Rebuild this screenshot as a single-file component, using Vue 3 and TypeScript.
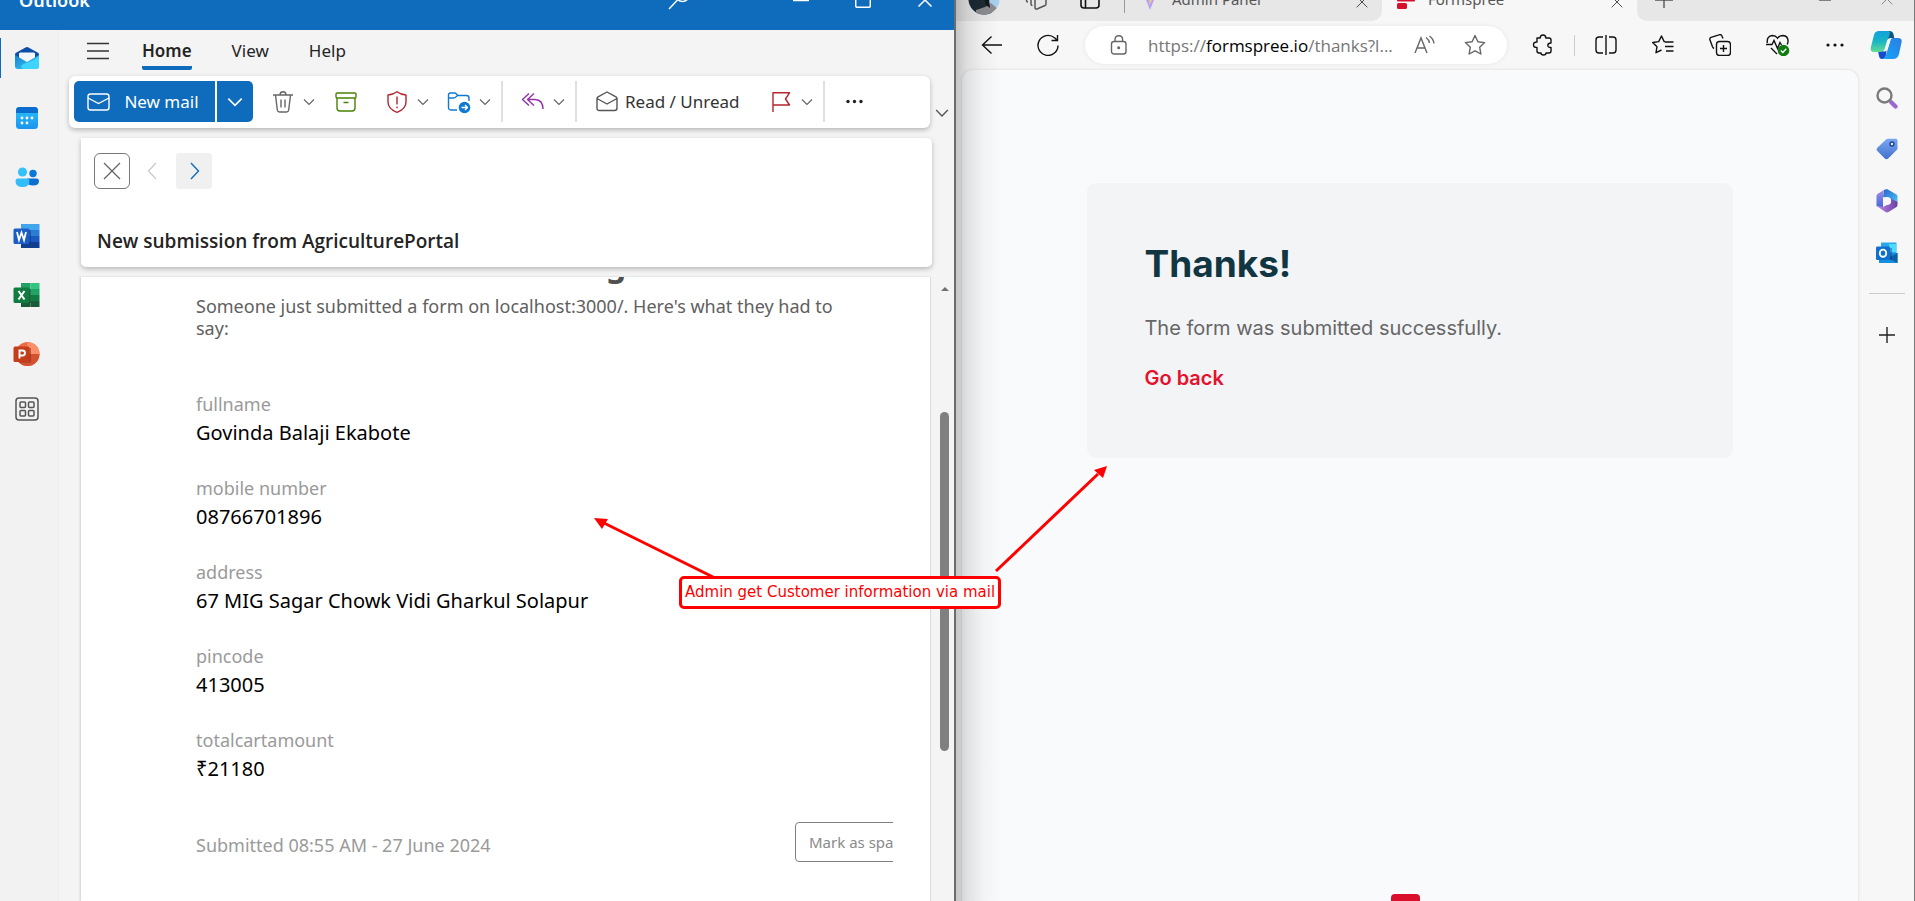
<script setup lang="ts">
interface Field {
  label: string
  value: string
}

const fields: Field[] = [
  { label: 'fullname', value: 'Govinda Balaji Ekabote' },
  { label: 'mobile number', value: '08766701896' },
  { label: 'address', value: '67 MIG Sagar Chowk Vidi Gharkul Solapur' },
  { label: 'pincode', value: '413005' },
  { label: 'totalcartamount', value: '₹21180' },
]

const menus: string[] = ['Home', 'View', 'Help']
</script>

<template>
  <div class="desktop">
    <svg class="defs" aria-hidden="true">
      <symbol id="chev" viewBox="0 0 12 12"><path d="M1 3.500l5 5 5-5" fill="none" stroke="currentColor" stroke-width="1.200" /></symbol>
      <symbol id="cross" viewBox="0 0 18 18"><path d="M1 1l16 16M17 1L1 17" fill="none" stroke="currentColor" stroke-width="1.300" /></symbol>
      <linearGradient id="lgMail" x1="0" y1="0" x2="1" y2="1"><stop offset="0" stop-color="#1b7fd0" /><stop offset="1" stop-color="#35d0fa" /></linearGradient>
      <linearGradient id="lgCal" x1="0" y1="0" x2="0" y2="1"><stop offset="0" stop-color="#2bc3fb" /><stop offset="1" stop-color="#1a94ee" /></linearGradient>
      <linearGradient id="lgTag" x1="0" y1="0" x2="0" y2="1"><stop offset="0" stop-color="#79a8f0" /><stop offset="1" stop-color="#4370cf" /></linearGradient>
      <linearGradient id="lgVite" x1="0" y1="0" x2="1" y2="0"><stop offset="0" stop-color="#9bb6fb" /><stop offset="1" stop-color="#d58df0" /></linearGradient>
      <linearGradient id="lgCoA" x1="0" y1="0" x2="0" y2="1"><stop offset="0" stop-color="#12a0e0" /><stop offset=".5" stop-color="#18b6c4" /><stop offset="1" stop-color="#62dc92" /></linearGradient>
      <linearGradient id="lgCoB" x1="0" y1="1" x2="1" y2="0"><stop offset="0" stop-color="#14a6fb" /><stop offset="1" stop-color="#2b7de0" /></linearGradient>
      <linearGradient id="lgM1" x1="0" y1="0" x2="1" y2="1"><stop offset="0" stop-color="#2b62c8" /><stop offset="1" stop-color="#49c6fa" /></linearGradient>
      <linearGradient id="lgM2" x1="0" y1="0" x2="0" y2="1"><stop offset="0" stop-color="#a68be8" /><stop offset="1" stop-color="#3b6ad8" /></linearGradient>
      <linearGradient id="lgM3" x1="0" y1="0" x2="1" y2="0"><stop offset="0" stop-color="#c38af0" /><stop offset="1" stop-color="#6a3fa0" /></linearGradient>
    </svg>

    <section class="outlook">
      <header class="titlebar">
        <span class="app-name">Outlook</span>
        <button class="tb-search" aria-label="Search"><svg width="24" height="24" viewBox="0 0 24 24"><circle cx="15.500" cy="7" r="6.500" /><path d="M10.500 12L2 21" /></svg></button>
        <button class="tb-btn" aria-label="Minimize"><svg width="16" height="16" viewBox="0 0 16 16"><path d="M0 8.500h16" /></svg></button>
        <button class="tb-btn" aria-label="Maximize"><svg width="16" height="16" viewBox="0 0 16 16"><rect x=".7" y=".7" width="14.600" height="14.600" rx="1.500" /></svg></button>
        <button class="tb-btn" aria-label="Close"><svg width="16" height="16" viewBox="0 0 16 16"><path d="M1.500 1.500l13 13M14.500 1.500l-13 13" /></svg></button>
      </header>

      <div class="outlook-main">
        <nav class="rail" aria-label="Apps">
          <button class="rail-btn active" aria-label="Mail">
            <svg width="24" height="24" viewBox="0 0 24 24"><path d="M0 8.500Q0 7.500 1 6.800L10.500 1.500q1.500-.8 3 0L23 6.800q1 .7 1 1.700V14H0z" fill="#0c4fa8" /><path d="M4 7h16v8H4z" fill="#fff" /><path d="M4 8q0-1.500 1.500-1.500h13Q20 6.500 20 8v3l-8 5-8-5z" fill="#f3f6fc" /><path d="M0 9l12 7 12-7v11q0 3-3 3H3q-3 0-3-3z" fill="url(#lgMail)" /><path d="M24 10v10q0 3-3 3H8q-3-2-1-4 1-1 4-2 9-3 13-7z" fill="#3fd4fb" /></svg>
          </button>
          <button class="rail-btn" aria-label="Calendar">
            <svg width="24" height="24" viewBox="0 0 24 24"><rect x="1" y="1" width="22" height="22" rx="3.500" fill="url(#lgCal)" /><path d="M1 7V4.500Q1 1 4.500 1h15Q23 1 23 4.500V7z" fill="#0b6cce" /><g fill="#fff"><circle cx="7" cy="12" r="1.400" /><circle cx="12" cy="12" r="1.400" /><circle cx="17" cy="12" r="1.400" /><circle cx="7" cy="17" r="1.400" /><circle cx="12" cy="17" r="1.400" /></g></svg>
          </button>
          <button class="rail-btn" aria-label="People">
            <svg width="24" height="24" viewBox="0 0 24 24"><circle cx="18" cy="8.500" r="3.700" fill="#0c78d6" /><path d="M12 13.500h10q2 0 2 2.500 0 4.500-6 4.500-5 0-6-3z" fill="#0a6fd0" /><circle cx="7.500" cy="7" r="4.600" fill="#35c2fb" /><path d="M2.500 13.500h10q2 0 2 2.500 0 6-7 6t-7-6q0-2.500 2-2.500z" fill="#33bdf8" /></svg>
          </button>
          <button class="rail-btn" aria-label="Word">
            <svg width="28" height="26" viewBox="0 0 28 26"><path d="M8 1h18.500v6H8z" fill="#41a5ee" /><path d="M8 7h18.500v6H8z" fill="#2b7cd3" /><path d="M8 13h18.500v6H8z" fill="#185abd" /><path d="M8 19h18.500v6H8z" fill="#103f91" /><path d="M8 7h10v14H8z" fill="#0b2f70" opacity=".45" /><rect x=".5" y="5.500" width="16" height="15.500" rx="1.500" fill="#1d5cc4" /><path d="M4 9l2 8 2.500-7.500L11 17l2-8" fill="none" stroke="#fff" stroke-width="1.800" /></svg>
          </button>
          <button class="rail-btn" aria-label="Excel">
            <svg width="28" height="26" viewBox="0 0 28 26"><path d="M8 1h9.500v6H8z" fill="#21a366" /><path d="M17.500 1h9v6h-9z" fill="#33c481" /><path d="M8 7h9.500v6H8z" fill="#107c41" /><path d="M17.500 7h9v6h-9z" fill="#21a366" /><path d="M8 13h9.500v12H8z" fill="#185c37" /><path d="M17.500 13h9v6h-9z" fill="#107c41" /><path d="M17.500 19h9v6h-9z" fill="#185c37" /><path d="M8 7h10v14H8z" fill="#0c3b22" opacity=".45" /><rect x=".5" y="5.500" width="16" height="15.500" rx="1.500" fill="#107c41" /><path d="M5.500 9l6 8.500M11.500 9l-6 8.500" fill="none" stroke="#fff" stroke-width="2" /></svg>
          </button>
          <button class="rail-btn" aria-label="PowerPoint">
            <svg width="28" height="26" viewBox="0 0 28 26"><circle cx="14.500" cy="13" r="12" fill="#ed6c47" /><path d="M14.500 1a12 12 0 0 1 12 12h-12z" fill="#ff8f6b" /><path d="M26.500 13a12 12 0 0 1-24 0z" fill="#d35230" /><path d="M4 7h14v14.500H6z" fill="#7c2510" opacity=".5" /><rect x=".5" y="5.500" width="16" height="15.500" rx="1.500" fill="#c43e1c" /><path d="M6.500 17.500V9.500h3a2.400 2.400 0 0 1 0 5h-3" fill="none" stroke="#fff" stroke-width="1.900" /></svg>
          </button>
          <button class="rail-btn more" aria-label="More apps">
            <svg width="24" height="24" viewBox="0 0 24 24" fill="none" stroke="#555" stroke-width="1.500"><rect x="1" y="1" width="22" height="22" rx="3" /><rect x="5" y="5" width="5.500" height="5.500" rx="1" /><rect x="13.500" y="5" width="5.500" height="5.500" rx="1" /><rect x="5" y="13.500" width="5.500" height="5.500" rx="1" /><rect x="13.500" y="13.500" width="5.500" height="5.500" rx="1" /></svg>
          </button>
        </nav>

        <div class="work">
          <div class="menubar">
            <button class="burger" aria-label="Toggle navigation"><svg width="22" height="18" viewBox="0 0 22 18"><path d="M0 1.500h22M0 9h22M0 16.500h22" stroke="#333" stroke-width="1.300" /></svg></button>
            <button v-for="(m, i) in menus" :key="m" class="menu" :class="{ current: i === 0 }">{{ m }}</button>
          </div>

          <div class="ribbon-row">
            <div class="ribbon">
              <button class="new-mail">
                <svg width="24" height="24" viewBox="0 0 24 24" fill="none" stroke="#fff" stroke-width="1.400"><rect x="2" y="4" width="21" height="16" rx="2.500" /><path d="M2 8l10.500 5.500L23 8" /></svg>
                New mail
              </button>
              <button class="new-more" aria-label="New mail options"><svg width="16" height="16"><use href="#chev" /></svg></button>
              <button class="tool" aria-label="Delete"><svg class="ic" viewBox="0 0 24 24" stroke="#666"><path d="M2 5h20M4.500 5l1.800 15q.3 2 2.300 2h6.800q2 0 2.300-2L19.500 5M9 5q0-3.200 3-3.200T15 5M10 9.500v8M14 9.500v8" /></svg><svg class="cv"><use href="#chev" /></svg></button>
              <button class="tool solo" aria-label="Archive"><svg class="ic" viewBox="0 0 24 24" stroke="#498205"><rect x="2" y="3" width="20" height="5" rx="1.200" /><path d="M3 8v10q0 3 3 3h12q3 0 3-3V8M9.500 12.500h5" /></svg></button>
              <button class="tool" aria-label="Report"><svg class="ic" viewBox="0 0 24 24" stroke="#b3262e"><path d="M12 1.800q4 3 9 3.200v7q0 7-9 10.300Q3 19 3 12V5q5-.2 9-3.200zM12 6.500v8M12 16.500v1.800" /></svg><svg class="cv"><use href="#chev" /></svg></button>
              <button class="tool" aria-label="Move to"><svg class="ic" viewBox="0 0 24 24" stroke="#0f78d4"><path d="M10 20H4q-2.500 0-2.500-2.500V5Q1.500 3 3.500 3h4q1 0 1.700.8L11 5.500h8.500q2.500 0 2.500 2.500v3M1.500 8h5q1.500 0 2.300-.9L10.500 5.500" /><circle cx="17.500" cy="17.500" r="5.800" fill="#0f78d4" stroke="none" /><path d="M14.500 17.500h6M18 15l2.500 2.500L18 20" stroke="#fff" /></svg><svg class="cv"><use href="#chev" /></svg></button>
              <span class="rule"></span>
              <button class="tool" aria-label="Reply all"><svg class="ic" viewBox="0 0 24 24" stroke="#9332a8"><path d="M8 3.500L1.500 9.500 8 15.500M13 3.500L6.500 9.500l6.500 6M6.500 9.500H14q8 .5 8 9.500" /></svg><svg class="cv"><use href="#chev" /></svg></button>
              <span class="rule"></span>
              <button class="tool text"><svg class="ic" viewBox="0 0 24 24" stroke="#555"><path d="M2 8.500q0-1 1-1.600L12 2l9 4.900q1 .6 1 1.600V18q0 2.500-2.500 2.500h-15Q2 20.500 2 18zM2 8.500l10 5.500 10-5.500" /></svg>Read / Unread</button>
              <button class="tool" aria-label="Flag"><svg class="ic" viewBox="0 0 24 24" stroke="#b3262e"><path d="M4 22V2.800h16.500L16.500 9l4 6H4" /></svg><svg class="cv"><use href="#chev" /></svg></button>
              <span class="rule"></span>
              <button class="tool" aria-label="More options"><svg class="ic" viewBox="0 0 24 24"><g fill="#222" stroke="none"><circle cx="5" cy="11.500" r="1.700" /><circle cx="11.500" cy="11.500" r="1.700" /><circle cx="18" cy="11.500" r="1.700" /></g></svg></button>
            </div>
            <button class="ribbon-more" aria-label="Ribbon display options"><svg width="14" height="14"><use href="#chev" /></svg></button>
          </div>

          <div class="subject-card">
            <div class="card-actions">
              <button class="close" aria-label="Close message"><svg width="18" height="18"><use href="#cross" /></svg></button>
              <button class="prev" aria-label="Previous message"><svg width="10" height="18" viewBox="0 0 10 18"><path d="M9 1L1.500 9 9 17" /></svg></button>
              <button class="next" aria-label="Next message"><svg width="10" height="18" viewBox="0 0 10 18"><path d="M1 1l7.500 8L1 17" /></svg></button>
            </div>
            <h1>New submission from AgriculturePortal</h1>
          </div>

          <div class="reader">
            <article class="mail">
              <h2>g</h2>
              <p class="intro">Someone just submitted a form on localhost:3000/. Here's what they had to say:</p>
              <dl>
                <div v-for="f in fields" :key="f.label">
                  <dt>{{ f.label }}</dt>
                  <dd>{{ f.value }}</dd>
                </div>
              </dl>
              <footer>
                <span>Submitted 08:55 AM - 27 June 2024</span>
                <button>Mark as spam</button>
              </footer>
            </article>
            <div class="scroll"><i class="arrow"></i><i class="thumb"></i></div>
          </div>
        </div>
      </div>
    </section>

    <section class="edge">
      <header class="tabs">
        <div class="tab-tools">
          <svg width="32" height="32" viewBox="0 0 32 32"><defs><clipPath id="av"><circle cx="16" cy="16" r="15.500" /></clipPath></defs><g clip-path="url(#av)"><path d="M0 0h32v32H0z" fill="#a9d0f0" /><path d="M0 0h12l3 12 4 6 2 8 5 6H0z" fill="#1d2a33" /><path d="M8 27l9-3 6-4 9 8v4H8z" fill="#8c8c90" /><path d="M16 14l5 2 1 9-4-3z" fill="#10161b" /></g></svg>
          <svg width="24" height="24" viewBox="0 0 24 24" fill="none" stroke="#555" stroke-width="1.500"><path d="M11 4l9-2q2 0 2 2v13q0 1-1 1.500L13 22q-2 .5-2-1.500zM7 3v14q0 1.500 1.500 1.500M2.500 3v10q0 2 1.500 2" /></svg>
          <svg width="20" height="20" viewBox="0 0 20 20" fill="none" stroke="#111" stroke-width="1.600"><rect x="1" y="1" width="18" height="18" rx="3" /><path d="M1 5.500h18M5.500 5.500V19" /></svg>
        </div>
        <button class="tab">
          <svg width="16" height="22" viewBox="0 0 16 22"><path d="M0 2h16L8 22z" fill="url(#lgVite)" /><path d="M6 1h6l-2 6h3l-6 10 1-7H5z" fill="#fbd65c" /></svg>
          <span>Admin Panel</span>
          <svg width="12" height="12" class="x"><use href="#cross" /></svg>
        </button>
        <button class="tab on">
          <svg width="18" height="20" viewBox="0 0 18 20"><g fill="#d60f2c"><rect width="18" height="5" rx="1" /><rect y="7" width="18" height="5.500" rx="1" /><rect y="14" width="10" height="6" rx="1.500" /></g></svg>
          <span>Formspree</span>
          <svg width="12" height="12" class="x"><use href="#cross" /></svg>
        </button>
        <div class="win">
          <svg width="18" height="18" viewBox="0 0 18 18"><path d="M0 10h18M9 0v18" /></svg>
          <span class="grow"></span>
          <svg width="12" height="12" viewBox="0 0 12 12" class="min"><path d="M0 7h12" /></svg>
          <svg width="12" height="12"><use href="#cross" /></svg>
        </div>
      </header>

      <div class="address-row">
        <button class="nav" aria-label="Back"><svg width="22" height="20" viewBox="0 0 22 20"><path d="M21 10H1.500M10.500 1.500L1.500 10l9 8.500" /></svg></button>
        <button class="nav reload" aria-label="Refresh"><svg width="22" height="22" viewBox="0 0 22 22"><path d="M21 11.500A10 10 0 1 1 17.500 3.800L20.500 6.500M20.500 1v5.500h-6" /></svg></button>
        <div class="omnibox">
          <svg width="18" height="20" viewBox="0 0 18 20"><rect x="1.500" y="6.500" width="14.500" height="12.500" rx="2.500" /><path d="M5 6.500V4.500q0-3.800 3.800-3.800t3.800 3.800v2" /><circle cx="8.700" cy="12.700" r=".8" fill="#555" /></svg>
          <a class="url" href="#">https://<b>formspree.io</b>/thanks?l...</a>
          <svg width="22" height="20" viewBox="0 0 22 20"><path d="M1 18L7 3l6 15M3 13h8M12 2.500q3 2 3.500 5.500M15.500 1q4 3 4.500 7.500" /></svg>
          <svg width="22" height="22" viewBox="0 0 22 22"><path d="M11 1.500l2.900 6.200 6.700.9-4.900 4.700 1.200 6.700L11 16.800 5.100 20l1.200-6.700L1.400 8.600l6.700-.9z" stroke-linejoin="round" /></svg>
        </div>
        <div class="toolset">
          <button aria-label="Extensions"><svg viewBox="0 0 22 22"><path d="M5 4h3.200q0-3 2.800-3t2.800 3H17q2 0 2 2v3q-3.200 0-3.200 2.300T19 13.500V17q0 2-2 2h-3q0 2-2.500 2T9 19H7q-2 0-2-2v-3.500q-3.500 0-3.500-2.800T5 8z" stroke-linejoin="round" /></svg></button>
          <i class="sep"></i>
          <button aria-label="Split screen"><svg viewBox="0 0 22 22"><path d="M8 3H4Q1 3 1 6v10q0 3 3 3h4M14 3h4q3 0 3 3v10q0 3-3 3h-4M11 1v20" /></svg></button>
          <button aria-label="Favorites"><svg viewBox="0 0 22 22"><path d="M14.500 8l-2.300-.4L9.500 2 6.700 7.600l-6 .9L5 12.700l-1 6L9.500 16M13 8h8.500M13 12.500h8.500M14 17h7.500" stroke-linejoin="round" /></svg></button>
          <button aria-label="Collections"><svg viewBox="0 0 22 22"><rect x="7.500" y="7.500" width="14" height="14" rx="3" /><path d="M14.500 11v7M11 14.500h7M5 14.500q-1-.5-1.500-1.700L1 6Q.3 4 2 3.300L10 .8q2-.7 2.800 1L14 4.500" /></svg></button>
          <button aria-label="Browser essentials"><svg class="wide" viewBox="0 0 24 22"><path d="M1.300 9Q.5 2 6.500 1.500q3 0 5 2.700Q13.500 1.500 17 1.500q5.500.5 5 6.500-.2 1.500-1 2.500M0 10.500h6l2-4 3.500 8 2.500-6 1.500 2.500M5 14l6 6" /><circle cx="17.500" cy="16.500" r="5.800" fill="#107c10" stroke="none" /><path d="M14.800 16.500l2 2 3.500-3.700" stroke="#fff" /></svg></button>
          <button aria-label="Settings"><svg viewBox="0 0 22 22"><g fill="#111" stroke="none"><circle cx="3" cy="11" r="1.600" /><circle cx="10" cy="11" r="1.600" /><circle cx="17" cy="11" r="1.600" /></g></svg></button>
        </div>
        <button class="copilot" aria-label="Copilot"><svg width="32" height="28" viewBox="0 0 32 28"><path d="M16 0h4q2.500 0 3.300 2.500L24.500 8H21q-3 0-4 3z" fill="#0a567e" /><path d="M8 20h6l3-5-1 9q-1 4-4 4-2.500 0-3-3z" fill="#174ad0" /><path d="M9 0h9q2.500 0 1.700 3L15 17q-1 4-5 4H4Q0 21 .8 16.500L4 4q1-4 5-4z" fill="url(#lgCoA)" /><path d="M22 7h6q4.500 0 3.500 4.500L29 23q-1.200 5-6 5H12q3 0 4-4l4-13q.7-4 2-4z" fill="url(#lgCoB)" /><path d="M17 9.500q.7-2.500 3.500-2.500h1.700q-1.700.5-2.300 3.500L17.500 18q-.7 2.500-3 2.500h-2q1.800-.7 2.500-3z" fill="#f7f7f7" /></svg></button>
      </div>

      <div class="view-row">
        <main class="page">
          <div class="thanks">
            <h2>Thanks!</h2>
            <p>The form was submitted successfully.</p>
            <a href="#">Go back</a>
          </div>
          <div class="brand"></div>
        </main>
        <aside class="sidebar">
          <button aria-label="Search"><svg width="22" height="22" viewBox="0 0 22 22"><path d="M13.500 13.500l1.500 1.500" stroke="#7b7b7b" stroke-width="2.500" /><path d="M15.500 15.500l4 4" stroke="#9a66d0" stroke-width="4.200" stroke-linecap="round" /><circle cx="8.500" cy="8.500" r="7" fill="#f7f7f7" stroke="#7b7b7b" stroke-width="2.400" /></svg></button>
          <button aria-label="Shopping"><svg width="22" height="22" viewBox="0 0 22 22"><path d="M12 .8h8q1.500 0 1.500 1.500v8q0 1-.8 1.800l-8.500 8.500q-1.700 1.500-3.400 0L1.300 13q-1.500-1.500 0-3.300L10 1.500q.8-.7 2-.7z" fill="url(#lgTag)" /><circle cx="16" cy="6" r="2" fill="#dbe8ff" stroke="#26408f" stroke-width="1.400" /></svg></button>
          <button aria-label="Microsoft 365"><svg width="22" height="24" viewBox="0 0 22 24"><path d="M8 1l3-1 9.500 5.500q1 .8 1 2V14L14 9.500 7 8z" fill="url(#lgM1)" /><path d="M8 1L1.500 5Q.5 5.800.5 7v10L7 19V8z" fill="url(#lgM2)" /><path d="M.5 17l9 6q1.500.8 3 0l8-5q1-.8 1-2v-3L15 9.500V14l-8 4z" fill="url(#lgM3)" /><circle cx="11" cy="12" r="4" fill="#f7f7f7" /></svg></button>
          <button aria-label="Outlook"><svg width="22" height="22" viewBox="0 0 22 22"><path d="M5 .5h15.500V11H5z" fill="#28a8ea" /><path d="M13 2h7v8h-7z" fill="#50d9ff" /><path d="M3 11h18.500v10H3z" fill="#1490df" /><path d="M21.500 11v10L12 16z" fill="#0f5fa8" /><path d="M5 6h11v12H5z" fill="#0a2f6b" opacity=".4" /><rect x="0" y="4.500" width="14" height="13.500" rx="1.300" fill="#0f6fcf" /><ellipse cx="7" cy="11.200" rx="3.200" ry="3.600" fill="none" stroke="#fff" stroke-width="1.900" /></svg></button>
          <hr />
          <button aria-label="Customize"><svg width="16" height="16" viewBox="0 0 16 16"><path d="M0 8h16M8 0v16" stroke="#222" stroke-width="1.400" /></svg></button>
        </aside>
      </div>
    </section>

    <svg class="arrows" aria-hidden="true">
      <g stroke="#f00" stroke-width="3"><path d="M713 577L604 523" /><path d="M996 571L1098 474" /></g>
      <path d="M594 518l14 1-6 10z" fill="#f00" /><path d="M1107 466l-13 4 9 8z" fill="#f00" />
    </svg>
    <div class="callout">Admin get Customer information via mail</div>
  </div>
</template>

<style>
body { margin: 0; overflow: hidden; }
</style>

<style scoped>
* { box-sizing: border-box; }
button { border: 0; background: none; padding: 0; margin: 0; font: inherit; color: inherit; display: flex; align-items: center; justify-content: center; flex: none; }
svg { flex: none; display: block; }
.desktop { position: relative; display: grid; grid-template-columns: 956px 1fr; height: 100vh; overflow: hidden; font-family: "Noto Sans", "Open Sans", sans-serif; }
.defs { position: absolute; width: 0; height: 0; }

.outlook { display: flex; flex-direction: column; min-width: 0; min-height: 0; margin-top: -31px; background: #f4f4f4; border-right: 2px solid #6c6c6c; }
.titlebar { height: 61px; flex: none; display: flex; align-items: center; background: #0f6cbd; color: #fff; padding: 0 21px 0 19px; }
.titlebar svg { fill: none; stroke: #fff; stroke-width: 1.500; }
.app-name { font-size: 18px; font-weight: 600; flex: 1; }
.tb-search { width: 24px; margin-right: 90px; }
.tb-btn { width: 16px; margin-left: 46px; }
.tb-search + .tb-btn { margin-left: 12px; }
.outlook-main { flex: 1; display: flex; min-height: 0; }
.rail { width: 59px; flex: none; background: #f2f2f2; border-right: 1px solid #eee; display: flex; flex-direction: column; padding-top: 8px; }
.rail-btn { height: 40px; margin-bottom: 19px; padding-right: 6px; border-left: 1px solid transparent; }
.rail-btn.active { border-left-color: #0f6cbd; margin-bottom: 20px; }
.rail-btn.more { height: 32px; }
.work { flex: 1; min-width: 0; display: flex; flex-direction: column; }
.menubar { display: flex; height: 46px; padding-left: 28px; color: #242424; font-size: 17px; }
.burger { width: 22px; height: 42px; margin-right: 33px; }
.menu { height: 40px; margin-right: 40px; border-bottom: 4px solid transparent; padding-top: 5px; }
.menu.current { font-weight: 600; border-bottom-color: #0f6cbd; border-radius: 2px; }
.ribbon-row { display: flex; padding-left: 10px; }
.ribbon { flex: 1; display: flex; align-items: center; height: 52px; padding: 0 0 1px 5px; background: #fff; border-radius: 6px; box-shadow: 0 2px 5px rgba(0, 0, 0, .25); font-size: 17px; color: #333; }
.new-mail { width: 141px; height: 41px; gap: 14px; padding-right: 4px; background: #0f6cbd; color: #fff; border-radius: 5px 0 0 5px; margin-right: 2px; }
.new-more { width: 36px; height: 41px; background: #0f6cbd; color: #fff; border-radius: 0 5px 5px 0; }
.tool { margin-left: 18px; gap: 8px; color: #666; }
.tool.solo { margin-left: 19px; margin-right: 9px; }
.tool.text { color: #333; gap: 6px; margin-right: 11px; }
.ic { width: 24px; height: 24px; fill: none; stroke-width: 1.400; stroke-linejoin: round; }
.cv { width: 12px; height: 12px; }
.rule { width: 2px; height: 41px; background: #e0e0e0; margin-left: 10px; flex: none; }
.ribbon-more { width: 24px; margin-top: 22px; color: #555; }
.subject-card { margin: 10px 22px 0; height: 129px; flex: none; background: #fff; border-radius: 0 5px 5px 5px; box-shadow: 0 2px 5px rgba(0, 0, 0, .25); padding: 15px 13px 0; }
.card-actions { display: flex; align-items: center; }
.card-actions svg { fill: none; stroke-width: 1.400; }
.close, .next { width: 36px; height: 36px; }
.close { border: 1px solid #777; border-radius: 6px; color: #666; }
.prev { width: 10px; margin: 0 19px 0 17px; stroke: #ccc; }
.next { background: #f0f0f0; border-radius: 3px; stroke: #0f6cbd; padding-left: 2px; }
h1 { margin: 38px 0 0 3px; font-family: "Open Sans", "Noto Sans", sans-serif; font-size: 19px; line-height: 28px; font-weight: 600; color: #242424; white-space: nowrap; }
.reader { flex: 1; display: flex; margin: 10px 0 0 22px; min-height: 0; }
.mail { flex: 1; min-width: 0; background: #fff; border-right: 1px solid #ddd; padding: 0 37px 0 115px; overflow: hidden; box-shadow: -1px 0 2px rgba(0, 0, 0, .15); }
.mail h2 { margin: -34px 0 0; padding-left: 410px; font-size: 32px; line-height: 42px; color: #505050; height: 42px; }
.intro { margin: 10px 40px 0 0; font-size: 18px; line-height: 22px; color: #606060; }
dl { margin: 50px 0 0; }
dl div { height: 84px; }
dt { font-size: 18px; line-height: 30px; color: #9a9a9a; }
dd { margin: 0; font-size: 20px; line-height: 28px; color: #000; }
footer { display: flex; align-items: center; height: 40px; margin-top: 13px; overflow: hidden; font-size: 18px; color: #9a9a9a; white-space: nowrap; }
footer span { width: 599px; flex: none; padding-top: 5px; }
footer button { width: 118px; height: 40px; border: 1px solid #808080; border-radius: 4px; font-size: 15px; color: #8a8a8a; padding-left: 13px; justify-content: flex-start; }
.scroll { width: 23px; flex: none; display: flex; flex-direction: column; align-items: center; padding-left: 4px; }
.arrow { margin-top: 10px; border: 4px solid transparent; border-top: 0; border-bottom-color: #707070; }
.thumb { width: 9px; height: 339px; margin-top: 121px; border-radius: 5px; background: #808080; }

.edge { position: relative; min-width: 0; min-height: 0; display: flex; flex-direction: column; margin-top: -23px; background: #f7f7f7; border-right: 1px solid #777; }
.edge::before { content: ""; position: absolute; inset: 0 auto 0 0; width: 44px; background: linear-gradient(90deg, rgba(0, 0, 0, .2), rgba(0, 0, 0, .1) 25%, rgba(0, 0, 0, .03) 60%, transparent); pointer-events: none; }
.tabs { height: 44px; flex: none; display: flex; align-items: stretch; background: #f7f7f7; font-size: 15px; color: #555; }
.tab-tools { width: 169px; flex: none; display: flex; align-items: center; background: #e7e7e7; padding-left: 12px; gap: 24px; }
.tab-tools svg:nth-child(2) { margin-right: 8px; }
.tab { width: 257px; background: #e7e7e7; justify-content: flex-start; gap: 14px; padding: 0 14px 0 17px; border-radius: 0 0 10px 0; position: relative; }
.tab::before { content: ""; position: absolute; left: -1px; top: 0; width: 1px; height: 36px; background: #999; }
.tab.on { width: 255px; background: #f7f7f7; gap: 13px; padding-left: 15px; }
.tab.on::before { display: none; }
.tab span { flex: 1; text-align: left; }
.tab .x { margin-top: 6px; color: #333; }
.win { flex: 1; background: #e7e7e7; border-radius: 0 0 0 10px; display: flex; align-items: center; padding: 0 21px 0 18px; color: #777; }
.win svg { stroke: #555; stroke-width: 1.400; fill: none; }
.win .min { margin-right: 50px; }
.grow { flex: 1; }
.address-row { height: 48px; flex: none; display: flex; align-items: center; padding-left: 25px; }
.address-row svg { fill: none; stroke: #111; stroke-width: 1.400; }
.nav { width: 22px; }
.reload { margin: 0 26px 0 34px; }
.omnibox { flex: 1; min-width: 0; height: 38px; display: flex; align-items: center; background: #fff; border-radius: 19px; box-shadow: 0 0 4px rgba(0, 0, 0, .08); padding: 0 21px 0 25px; }
.omnibox svg { stroke: #666; }
.omnibox svg:last-child { margin-left: 28px; }
.url { flex: 1; margin-left: 20px; font-family: "Open Sans", "Noto Sans", sans-serif; font-size: 17px; color: #767676; text-decoration: none; white-space: nowrap; }
.url b { font-weight: 400; color: #000; }
.toolset { display: flex; align-items: center; gap: 35px; margin-left: 25px; }
.toolset svg { width: 22px; height: 22px; }
.toolset .wide { width: 24px; }
.sep { width: 1px; height: 21px; background: #ccc; margin: 0 -15px; }
.address-row .copilot svg { stroke: none; }
.copilot { margin: 0 12px 0 23px; }
.view-row { flex: 1; min-height: 0; display: flex; }
.page { flex: 1; margin-left: 5px; display: flex; flex-direction: column; align-items: center; background: #f9fafc; border: 1px solid #ebebeb; border-bottom: 0; border-radius: 12px 12px 0 0; box-shadow: 0 0 3px rgba(0, 0, 0, .06); padding-top: 113px; overflow: hidden; }
.thanks { width: 72%; height: 275px; flex: none; background: #f3f4f6; border-radius: 9px; padding: 56px 57px; font-family: Inter, sans-serif; }
.thanks h2 { margin: 0; font-size: 37px; line-height: 50px; color: #113642; }
.thanks p { margin: 24px 0 20px; font-size: 20px; line-height: 30px; color: #666; }
.thanks a { font-size: 20px; line-height: 30px; font-weight: 600; color: #e5122e; text-decoration: none; }
.brand { width: 29px; height: 20px; flex: none; margin-top: 436px; margin-right: 9px; border-radius: 4px; background: #d90f2c; }
.sidebar { width: 55px; display: flex; flex-direction: column; align-items: center; padding-top: 18px; gap: 29px; }
hr { width: 36px; height: 1px; border: 0; background: #ccc; margin: 0; }
.sidebar hr + button { margin-top: 4px; }

.arrows { position: absolute; inset: 0; width: 100%; height: 100%; pointer-events: none; }
.callout { position: absolute; left: 679px; top: 576px; height: 33px; padding: 0 3px; border: 3px solid #f00; border-radius: 5px; background: #fff; color: #f00; font: 15px/27px "DejaVu Sans", Verdana, sans-serif; white-space: nowrap; }
</style>
